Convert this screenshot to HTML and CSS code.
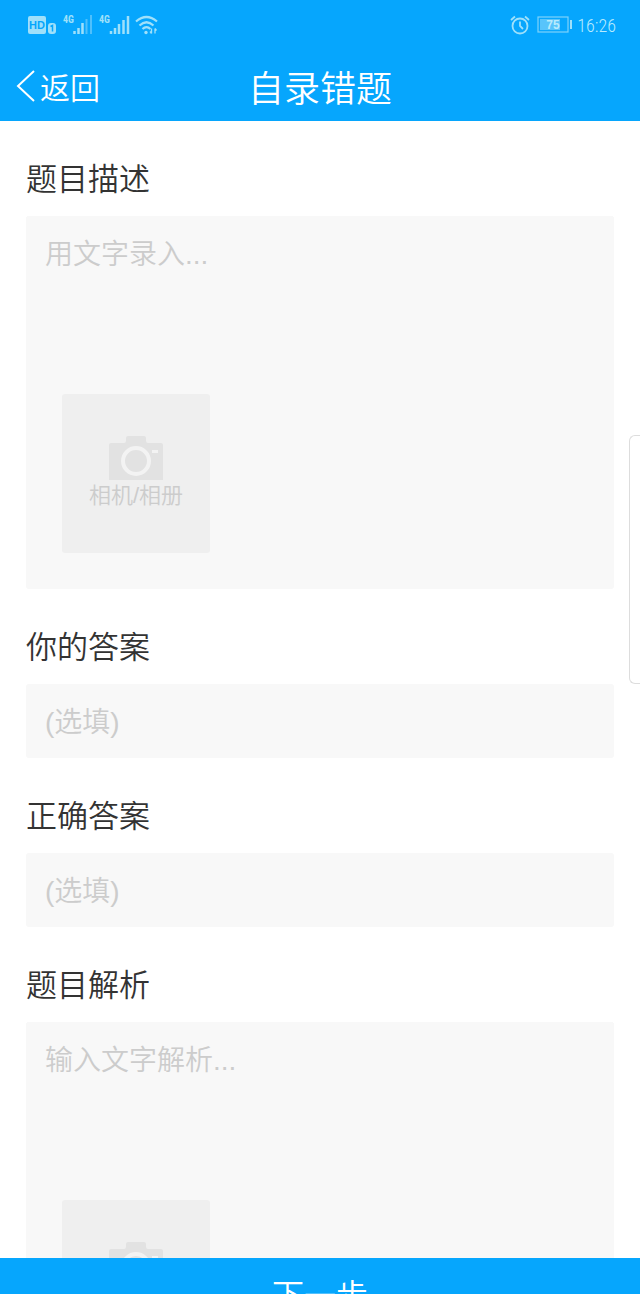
FILE: index.html
```html
<!DOCTYPE html>
<html lang="zh-CN">
<head>
  <meta charset="UTF-8">
  <meta name="viewport" content="width=device-width, initial-scale=1.0">
  <title>自录错题</title>
  <link rel="stylesheet" href="styles.css">
</head>
<body>
  <header>
    <div class="status-bar">
      <div class="status-group">
        <svg width="29" height="20" viewBox="0 0 29 20">
          <rect x="0" y="1" width="18" height="18" rx="2" fill="#9fe0fa"/>
          <text class="svg-hd" x="9" y="14" text-anchor="middle">HD</text>
          <rect x="20" y="8" width="8" height="11" rx="3" fill="#9fe0fa"/>
          <path d="M22.500 11.500L24.500 10.500V16.500" fill="none" stroke="#06a6fd" stroke-width="1.500"/>
        </svg>
        <svg class="signal" width="30" height="20" viewBox="0 0 30 20">
          <text class="svg-4g" x="0" y="8">4G</text>
          <path d="M11.500 16v3M15.500 13v6M19.500 8v11" stroke="#9fe0fa" stroke-width="2.500"/>
          <path d="M23.500 4v15M28 0v19" stroke="#4fc0fc" stroke-width="2"/>
        </svg>
        <svg class="signal" width="31" height="20" viewBox="0 0 31 20">
          <text class="svg-4g" x="0" y="8">4G</text>
          <path d="M12 16v3M16 13v6M20 9v10M24.500 5v14M29 1v18" stroke="#9fe0fa" stroke-width="2.500"/>
        </svg>
        <svg class="wifi" width="23" height="20" viewBox="0 0 23 20">
          <path d="M1 6.500Q11.500-2.500 22 6.500M4.500 10.500Q11.500 4 18.500 10.500M7.500 14Q11.500 10 15.500 14" fill="none" stroke="#9fe0fa" stroke-width="2.200"/>
          <circle cx="11" cy="17.500" r="1.700" fill="#9fe0fa"/>
          <path d="M16.500 13.500v5M15 16.500l1.500 2M20 18.500v-5M21.500 15.500l-1.500-2" stroke="#9fe0fa" stroke-width="1.300"/>
        </svg>
      </div>
      <div class="status-group">
        <svg width="20" height="20" viewBox="0 0 20 20" fill="none" stroke="#9fe0fa" stroke-width="1.800">
          <circle cx="10" cy="11" r="7.500"/>
          <path d="M10 6.500V11l3 3M1 5l4-3.500M19 5l-4-3.500"/>
        </svg>
        <svg class="battery" width="36" height="18" viewBox="0 0 36 18">
          <rect x="1" y="1" width="30" height="15" fill="none" stroke="#7fd3fb" stroke-width="1.200"/>
          <rect x="3" y="3" width="20" height="11" fill="#58c4fb"/>
          <path d="M34 4v9" stroke="#9fe0fa" stroke-width="2"/>
          <text class="svg-battery" x="16" y="13" text-anchor="middle">75</text>
        </svg>
        <span class="time">16:26</span>
      </div>
    </div>
    <div class="nav-bar">
      <a class="back" href="#">
        <svg width="20" height="34" viewBox="0 0 20 34">
          <path d="M18 2L2 17L18 32" fill="none" stroke="#fff" stroke-width="2"/>
        </svg>
        返回
      </a>
      <h1>自录错题</h1>
    </div>
  </header>

  <main>
    <form id="questionForm">
      <label for="description">题目描述</label>
      <div class="box">
        <textarea id="description" name="description" placeholder="用文字录入..."></textarea>
        <button type="button" class="upload">
          <svg width="54" height="44" viewBox="0 0 54 44">
            <path d="M2 7H15Q17 7 17 5V2Q17 0 19 0H35Q37 0 37 2V5Q37 7 39 7H52Q54 7 54 9V44H0V9Q0 7 2 7Z" fill="#e2e2e2"/>
            <circle cx="27" cy="25" r="13" fill="none" stroke="#f3f3f3" stroke-width="4"/>
            <path d="M43 14h6v3h-6z" fill="#f3f3f3"/>
          </svg>
          相机/相册
        </button>
      </div>

      <label for="answer">你的答案</label>
      <input type="text" id="answer" name="answer" placeholder="(选填)">

      <label for="correct">正确答案</label>
      <input type="text" id="correct" name="correct" placeholder="(选填)">

      <label for="analysis">题目解析</label>
      <div class="box">
        <textarea id="analysis" name="analysis" placeholder="输入文字解析..."></textarea>
        <button type="button" class="upload">
          <svg width="54" height="44" viewBox="0 0 54 44">
            <path d="M2 7H15Q17 7 17 5V2Q17 0 19 0H35Q37 0 37 2V5Q37 7 39 7H52Q54 7 54 9V44H0V9Q0 7 2 7Z" fill="#e2e2e2"/>
            <circle cx="27" cy="25" r="13" fill="none" stroke="#f3f3f3" stroke-width="4"/>
            <path d="M43 14h6v3h-6z" fill="#f3f3f3"/>
          </svg>
          相机/相册
        </button>
      </div>
    </form>
  </main>

  <footer>
    <button type="submit" form="questionForm" class="next">下一步</button>
  </footer>

  <div class="side-panel"></div>
</body>
</html>
```
FILE: styles.css
```css
* {
  box-sizing: border-box;
}

body {
  font-family: "Liberation Sans", "Noto Sans CJK SC", sans-serif;
  font-weight: 350;
  background-color: #fff;
  color: #333;
  margin: 0;
  display: flex;
  flex-direction: column;
  height: 100vh;
  overflow: hidden;
}

input,
textarea,
button {
  font: inherit;
  border: none;
  margin: 0;
}

header {
  background-color: #06a6fd;
  color: #fff;
  flex-shrink: 0;
}

.status-bar {
  display: flex;
  justify-content: space-between;
  align-items: center;
  height: 50px;
  padding: 0 24px 0 28px;
}

.status-group {
  display: flex;
  align-items: center;
}

.signal {
  margin-left: 6px;
}

.wifi {
  margin-left: 5px;
}

.battery {
  margin: 0 4px 0 7px;
}

.svg-hd {
  font-size: 11px;
  font-weight: bold;
  fill: #06a6fd;
}

.svg-4g {
  font-family: "Roboto Condensed", Roboto, sans-serif;
  font-size: 10px;
  font-weight: bold;
  fill: #9fe0fa;
}

.svg-battery {
  font-size: 12px;
  font-weight: bold;
  fill: #b8ebfd;
}

.time {
  font-family: "Roboto Condensed", Roboto, sans-serif;
  font-size: 18px;
  color: #b8ebfd;
}

.nav-bar {
  display: grid;
  grid-template-columns: 1fr auto 1fr;
  align-items: center;
  height: 71px;
  padding: 0 16px;
}

.back {
  display: flex;
  align-items: center;
  gap: 4px;
  color: #fff;
  font-size: 30px;
  text-decoration: none;
}

h1 {
  font-size: 36px;
  font-weight: inherit;
  margin: 0;
}

main {
  flex: 1;
  min-height: 0;
  overflow-y: auto;
  scrollbar-width: none;
}

form {
  padding: 0 26px 36px;
}

label {
  display: block;
  padding: 37px 0 14px;
  font-size: 31px;
  line-height: 44px;
}

.box {
  background-color: #f8f8f8;
  border-radius: 3px;
  padding-bottom: 36px;
}

textarea,
input {
  display: block;
  width: 100%;
  padding: 18px 19px 14px;
  background-color: #f8f8f8;
  border-radius: 3px;
  color: #333;
  font-size: 28px;
  line-height: 42px;
  outline: none;
}

textarea {
  height: 178px;
  resize: none;
}

::placeholder {
  color: #ccc;
  opacity: 1;
}

.upload {
  display: flex;
  flex-direction: column;
  align-items: center;
  justify-content: center;
  width: 148px;
  height: 159px;
  margin-left: 36px;
  padding: 0;
  background-color: #efefef;
  border-radius: 3px;
  color: #ccc;
  font-size: 22px;
  line-height: 32px;
  cursor: pointer;
}

footer {
  flex-shrink: 0;
  height: 36px;
  overflow: hidden;
  background-color: #06a6fd;
}

.next {
  display: block;
  width: 100%;
  height: 70px;
  background-color: #06a6fd;
  color: #fff;
  font-size: 32px;
  cursor: pointer;
}

/* edge panel handle, over the form */
.side-panel {
  position: absolute;
  top: 435px;
  right: 0;
  width: 11px;
  height: 249px;
  background-color: #fff;
  border: 1px solid #ddd;
  border-right: none;
  border-radius: 6px 0 0 6px;
}
```
